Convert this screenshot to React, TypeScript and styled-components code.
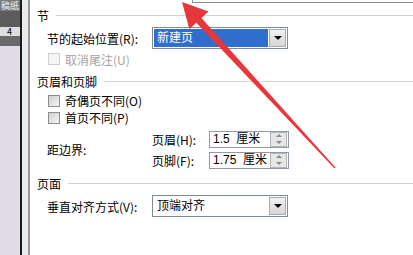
import React from "react";
import styled, { createGlobalStyle } from "styled-components";

const Global = createGlobalStyle`
  html, body { margin: 0; padding: 0; background: #fff; }
  body { font-family: "Noto Sans CJK SC", "Liberation Sans", sans-serif; font-size: 12px; color: #000; }
`;

const Screen = styled.div`
  position: relative;
  width: 413px;
  height: 255px;
  display: flex;
  overflow: hidden;
  background: #fff;
`;

const SideStrip = styled.div`
  width: 20px;
  display: flex;
  flex-direction: column;
  background: #e2dce8;
  overflow: hidden;
`;

const StripBand = styled.div<{ $h: number; $bg: string; $fg?: string }>`
  height: ${(p) => p.$h}px;
  background: ${(p) => p.$bg};
  color: ${(p) => p.$fg || "#000"};
  font-size: 9px;
  line-height: ${(p) => p.$h}px;
  white-space: nowrap;
  padding-left: 1px;
`;

const DarkRule = styled.div`
  width: 2px;
  background: #1a1a1a;
`;

const Gutter = styled.div`
  width: 6px;
  background: #e8ecef;
  border-right: 2px solid #9a9a9a;
`;

const Panel = styled.div`
  flex: 1;
  display: flex;
  flex-direction: column;
`;

const TabEdge = styled.div`
  height: 4px;
  display: flex;
`;

const TabGap = styled.div`
  width: 162px;
`;

const TabRest = styled.div`
  flex: 1;
  height: 2px;
  border-left: 1px solid #8c8c8c;
  border-bottom: 1px solid #8c8c8c;
`;

const Content = styled.div`
  padding-left: 7px;
  display: flex;
  flex-direction: column;
`;

const Heading = styled.div<{ $mt?: number }>`
  height: 22px;
  margin-top: ${(p) => p.$mt || 0}px;
  display: flex;
  align-items: center;
  gap: 7px;
  font-size: 12px;
  &::after {
    content: "";
    flex: 1;
    height: 1px;
    background: #d4d4d4;
  }
`;

const Row = styled.div<{ $h: number }>`
  height: ${(p) => p.$h}px;
  display: flex;
  align-items: center;
  padding-left: 10px;
`;

const Label = styled.span<{ $w?: number; $muted?: boolean }>`
  width: ${(p) => (p.$w ? `${p.$w}px` : "auto")};
  flex: none;
  color: ${(p) => (p.$muted ? "#a3a3a3" : "#000")};
  white-space: nowrap;
`;

const Check = styled.span<{ $muted?: boolean }>`
  width: 10px;
  height: 10px;
  margin: 0 5px 0 1px;
  border: 1px solid ${(p) => (p.$muted ? "#cfcfcf" : "#8e8e8e")};
  background: ${(p) =>
    p.$muted
      ? "#f4f4f4"
      : "linear-gradient(135deg, #cfcfcf 0%, #e6e6e6 60%, #f6f6f6 100%)"};
`;

const Select = styled.div`
  width: 132px;
  height: 18px;
  border: 1px solid #7f8c99;
  display: flex;
  align-items: stretch;
  padding: 1px;
  box-sizing: content-box;
`;

const SelectValue = styled.div<{ $hl?: boolean }>`
  flex: 1;
  margin-right: 1px;
  padding-left: 3px;
  line-height: 16px;
  background: ${(p) => (p.$hl ? "#2f6ecc" : "transparent")};
  color: ${(p) => (p.$hl ? "#fff" : "#000")};
`;

const DropButton = styled.div`
  width: 15px;
  border: 1px solid #a9a9a9;
  background: linear-gradient(#f2f2f2, #d6d6d6);
  display: flex;
  align-items: center;
  justify-content: center;
  &::after {
    content: "";
    border-left: 4px solid transparent;
    border-right: 4px solid transparent;
    border-top: 4px solid #000;
  }
`;

const MarginBlock = styled.div`
  display: flex;
  align-items: center;
  padding-left: 10px;
  margin-top: 2px;
  height: 43px;
`;

const MarginRows = styled.div`
  display: flex;
  flex-direction: column;
  gap: 3px;
`;

const NumRow = styled.div`
  height: 18px;
  display: flex;
  align-items: center;
`;

const NumBox = styled.div`
  width: 75px;
  height: 15px;
  border: 1px solid #8f9aa6;
  display: flex;
  align-items: center;
  padding-left: 3px;
`;

const NumText = styled.span`
  flex: 1;
  white-space: pre;
  font-family: "Liberation Sans", "Noto Sans CJK SC", sans-serif;
  font-size: 12px;
  line-height: 15px;
`;

const Spin = styled.div`
  width: 15px;
  height: 13px;
  margin-right: 1px;
  display: flex;
  flex-direction: column;
  border: 1px solid #b4b4b4;
  background: #e4e6e8;
`;

const SpinHalf = styled.div<{ $up?: boolean }>`
  flex: 1;
  display: flex;
  align-items: center;
  justify-content: center;
  &::after {
    content: "";
    border-left: 3px solid transparent;
    border-right: 3px solid transparent;
    ${(p) => (p.$up ? "border-bottom: 3px solid #8a8a8a;" : "border-top: 3px solid #8a8a8a;")}
  }
`;

const Overlay = styled.svg`
  position: absolute;
  left: 0;
  top: 0;
  pointer-events: none;
`;

const NumField = ({ value }: { value: string }) => (
  <NumBox>
    <NumText>{value}</NumText>
    <Spin>
      <SpinHalf $up />
      <SpinHalf />
    </Spin>
  </NumBox>
);

const App = () => {
  return (
    <>
      <Global />
      <Screen>
        <SideStrip>
          <StripBand $h={11} $bg="#7b7b7b" $fg="#f0f0f0">稿纸</StripBand>
          <StripBand $h={16} $bg="#5c5c5c" />
          <StripBand $h={9} $bg="#dedede">&nbsp;&nbsp;&nbsp;4</StripBand>
          <StripBand $h={10} $bg="#6a6a6a" />
          <StripBand $h={209} $bg="#e2dce8" />
        </SideStrip>
        <DarkRule />
        <Gutter />
        <Panel>
          <TabEdge>
            <TabGap />
            <TabRest />
          </TabEdge>
          <Content>
            <Heading>节</Heading>
            <Row $h={24}>
              <Label $w={105}>节的起始位置(R):</Label>
              <Select>
                <SelectValue $hl>新建页</SelectValue>
                <DropButton />
              </Select>
            </Row>
            <Row $h={18}>
              <Check $muted />
              <Label $muted>取消尾注(U)</Label>
            </Row>
            <Heading $mt={2}>页眉和页脚</Heading>
            <Row $h={17}>
              <Check />
              <Label>奇偶页不同(O)</Label>
            </Row>
            <Row $h={17}>
              <Check />
              <Label>首页不同(P)</Label>
            </Row>
            <MarginBlock>
              <Label $w={105}>距边界:</Label>
              <MarginRows>
                <NumRow>
                  <Label $w={57}>页眉(H):</Label>
                  <NumField value="1.5  厘米" />
                </NumRow>
                <NumRow>
                  <Label $w={57}>页脚(F):</Label>
                  <NumField value="1.75  厘米" />
                </NumRow>
              </MarginRows>
            </MarginBlock>
            <Heading $mt={1}>页面</Heading>
            <Row $h={24}>
              <Label $w={105}>垂直对齐方式(V):</Label>
              <Select>
                <SelectValue>顶端对齐</SelectValue>
                <DropButton />
              </Select>
            </Row>
          </Content>
        </Panel>
        <Overlay width={413} height={255} viewBox="0 0 413 255">
          <polygon
            points="182,2 208.5,11.6 201.5,18 335.5,167.5 334.5,168.5 196.3,22.8 189.4,29.2"
            fill="#e8373b"
          />
        </Overlay>
      </Screen>
    </>
  );
};

export default App;
